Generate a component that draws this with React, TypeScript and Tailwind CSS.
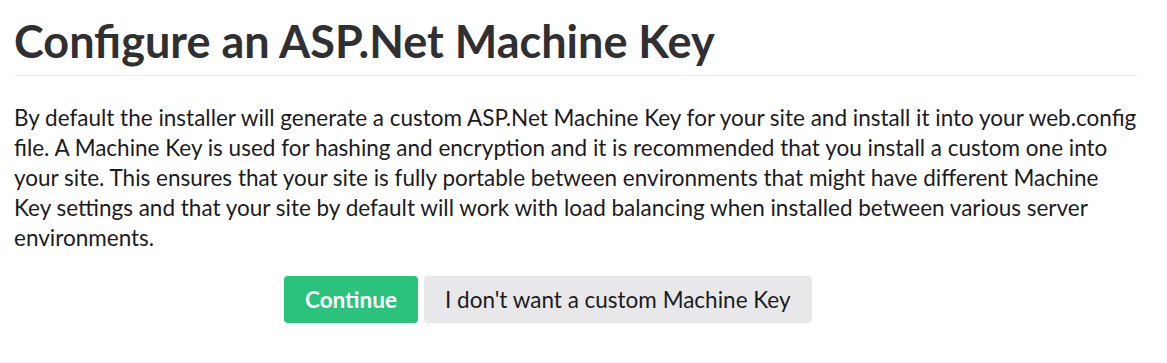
import React from "react";

export default function App() {
  return (
    <div className="min-h-screen bg-white font-['Lato','Noto_Sans',sans-serif] text-[#1b1b1d]">
      <div className="pl-[14px] pr-[28px] pt-[12px]">
        {/* Heading */}
        <h1 className="text-[45px] leading-[58px] font-bold text-[#303033] pb-[5px] border-b border-[#f0f0f0]">
          Configure an ASP.Net Machine Key
        </h1>

        <p className="mt-[27px] text-[22.5px] leading-[30px]">
          By default the installer will generate a custom ASP.Net Machine Key for your site and install it into your web.config
          <br />
          file. A Machine Key is used for hashing and encryption and it is recommended that you install a custom one into
          <br />
          your site. This ensures that your site is fully portable between environments that might have different Machine
          <br />
          Key settings and that your site by default will work with load balancing when installed between various server
          <br />
          environments.
        </p>

        {/* Actions */}
        <div className="mt-[23px] flex gap-[6px] pl-[270px]">
          <button className="h-[47px] px-[21px] rounded-[4px] bg-[#2bc37c] text-white text-[22.5px] font-bold">
            Continue
          </button>
          <button className="h-[47px] px-[21px] rounded-[4px] bg-[#e8e8eb] text-[#1b1b1d] text-[22.5px]">
            I don't want a custom Machine Key
          </button>
        </div>
      </div>
    </div>
  );
}
